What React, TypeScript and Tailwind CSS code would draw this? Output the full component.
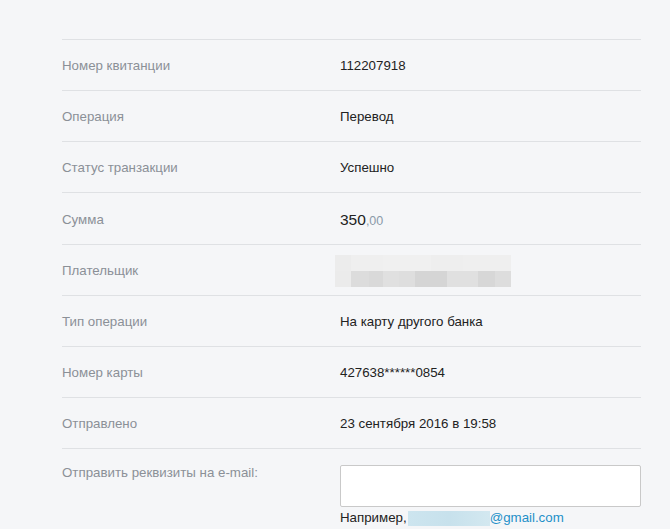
import React from "react";

const rows: { label: string; value: React.ReactNode }[] = [
  { label: "Номер квитанции", value: "112207918" },
  { label: "Операция", value: "Перевод" },
  { label: "Статус транзакции", value: "Успешно" },
  {
    label: "Сумма",
    value: (
      <span>
        <span className="text-[15.5px] text-[#222]">350</span>
        <span className="text-[12.5px] text-[#8a9aa8]">,00</span>
      </span>
    ),
  },
  {
    label: "Плательщик",
    value: (
      <div className="ml-[-5px] flex h-[32px] w-[176px] flex-col">
        <div className="flex h-[16px]">
          <div className="w-[16px] bg-[#ececec]" />
          <div className="w-[32px] bg-[#efefef]" />
          <div className="w-[48px] bg-[#f0f0f0]" />
          <div className="w-[32px] bg-[#eeeeee]" />
          <div className="w-[48px] bg-[#efefef]" />
        </div>
        <div className="flex h-[16px]">
          <div className="w-[16px] bg-[#ebebeb]" />
          <div className="w-[18px] bg-[#dcdcdc]" />
          <div className="w-[14px] bg-[#d9d9d9]" />
          <div className="w-[16px] bg-[#e0e0e0]" />
          <div className="w-[16px] bg-[#dedede]" />
          <div className="w-[32px] bg-[#d5d5d5]" />
          <div className="w-[31px] bg-[#e0e0e0]" />
          <div className="w-[17px] bg-[#d7d7d7]" />
          <div className="w-[16px] bg-[#dddddd]" />
        </div>
      </div>
    ),
  },
  { label: "Тип операции", value: "На карту другого банка" },
  { label: "Номер карты", value: "427638******0854" },
  { label: "Отправлено", value: "23 сентября 2016 в 19:58" },
];

export default function App() {
  return (
    <div
      className="min-h-[529px] w-full bg-[#f5f6f8] pt-[39px]"
      style={{ fontFamily: '"Liberation Sans", Arial, sans-serif' }}
    >
      <div className="ml-[62px] w-[579px]">
        {rows.map((r, i) => (
          <div
            key={r.label}
            className={`flex items-center border-t border-[#dfe1e4] pt-[2px] ${i === 3 ? "h-[52px]" : "h-[51px]"}`}
          >
            <div className="w-[278px] text-[13.3px] text-[#8b9097]">{r.label}</div>
            <div className="flex-1 text-[13.3px] text-[#222]">{r.value}</div>
          </div>
        ))}
        <div className="flex border-t border-[#dfe1e4] pt-[16px]">
          <div className="w-[278px] text-[13.3px] leading-[16px] text-[#8b9097]">
            Отправить реквизиты на e-mail:
          </div>
          <div className="flex-1">
            <div className="h-[42px] w-[301px] rounded-[2px] border border-[#c9c9c9] bg-white" />
            <div className="mt-[3px] flex items-center text-[13.3px] leading-[16px]">
              <span className="text-[#222]">Например,</span>
              <span className="ml-[1px] inline-block h-[15px] w-[82px] bg-gradient-to-r from-[#cde5ef] via-[#c7e1ec] to-[#d3e8f0]" />
              <span className="text-[#1e90c8]">@gmail.com</span>
            </div>
          </div>
        </div>
      </div>
    </div>
  );
}
